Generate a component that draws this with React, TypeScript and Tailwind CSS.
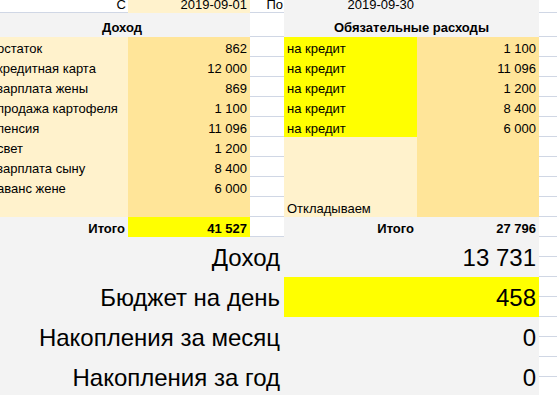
import React from "react";

const font = { fontFamily: '"Liberation Sans", Arial, sans-serif' };

type CellProps = {
  w: string;
  bg: string;
  align?: "left" | "right" | "center";
  bold?: boolean;
  children?: React.ReactNode;
};

function Cell({ w, bg, align = "left", bold, children }: CellProps) {
  const j =
    align === "right" ? "justify-end pr-[3px]" : align === "center" ? "justify-center" : "justify-start pl-[3px]";
  return (
    <div className={`${w} ${bg} ${j} ${bold ? "font-bold" : ""} flex h-full items-end overflow-hidden whitespace-nowrap pb-[1px] text-[13px] leading-[15px] text-black`}>
      {children}
    </div>
  );
}

function Grid({ w }: { w: string }) {
  return <div className={`${w} h-full border-b border-[#d0d7e5] bg-white`} />;
}

const income: [string, string][] = [
  ["остаток", "862"],
  ["кредитная карта", "12 000"],
  ["зарплата жены", "869"],
  ["продажа картофеля", "1 100"],
  ["пенсия", "11 096"],
  ["свет", "1 200"],
  ["зарплата сыну", "8 400"],
  ["аванс жене", "6 000"],
  ["", ""],
];

const expenses: [string, string, boolean][] = [
  ["на кредит", "1 100", true],
  ["на кредит", "11 096", true],
  ["на кредит", "1 200", true],
  ["на кредит", "8 400", true],
  ["на кредит", "6 000", true],
  ["", "", false],
  ["", "", false],
  ["", "", false],
  ["Откладываем", "", false],
];

const big: [string, string, boolean][] = [
  ["Доход", "13 731", false],
  ["Бюджет на день", "458", true],
  ["Накопления за месяц", "0", false],
  ["Накопления за год", "0", false],
];

export default function App() {
  return (
    <div className="h-[395px] w-[557px] overflow-hidden bg-white" style={font}>
      {/* top row */}
      <div className="flex h-[13px]">
        <div className="flex h-full w-[128px] items-end justify-end overflow-hidden border-b border-[#d0d7e5] bg-white pr-[2px] text-[13px] leading-[15px]">С</div>
        <Cell w="w-[122px]" bg="bg-[#fff2cc]" align="right">2019-09-01</Cell>
        <div className="flex h-full w-[34px] items-end justify-end overflow-hidden border-b border-[#d0d7e5] bg-white pr-[1px] text-[13px] leading-[15px]">По</div>
        <Cell w="w-[133px]" bg="bg-[#f3f3f3]" align="right">2019-09-30</Cell>
        <Cell w="w-[122px]" bg="bg-[#f3f3f3]" />
        <Grid w="flex-1" />
      </div>
      {/* header row */}
      <div className="flex h-[24px]">
        <div className="flex h-full w-[250px] items-end justify-center bg-[#f3f3f3] pb-[2px] pr-[6px] text-[13px] font-bold leading-[15px] text-black">Доход</div>
        <Grid w="w-[34px]" />
        <div className="flex h-full w-[255px] items-end justify-center bg-[#f3f3f3] pb-[2px] text-[13px] font-bold leading-[15px] text-black">Обязательные расходы</div>
        <Grid w="flex-1" />
      </div>
      {/* data rows */}
      {income.map((r, i) => (
        <div key={i} className="flex h-[20px]">
          <Cell w="w-[128px]" bg="bg-[#fff2cc]">
            <span className="-ml-[6px]">{r[0]}</span>
          </Cell>
          <Cell w="w-[122px]" bg="bg-[#ffe599]" align="right">{r[1]}</Cell>
          <Grid w="w-[34px]" />
          <Cell w="w-[133px]" bg={expenses[i][2] ? "bg-[#ffff00]" : "bg-[#fff2cc]"}>{expenses[i][0]}</Cell>
          <Cell w="w-[122px]" bg="bg-[#ffe599]" align="right">{expenses[i][1]}</Cell>
          <Grid w="flex-1" />
        </div>
      ))}
      {/* totals */}
      <div className="flex h-[20px]">
        <Cell w="w-[128px]" bg="bg-[#f3f3f3]" align="right" bold>Итого</Cell>
        <Cell w="w-[122px]" bg="bg-[#ffff00]" align="right" bold>41 527</Cell>
        <Grid w="w-[34px]" />
        <Cell w="w-[133px]" bg="bg-[#f3f3f3]" align="right" bold>Итого</Cell>
        <Cell w="w-[122px]" bg="bg-[#f3f3f3]" align="right" bold>27 796</Cell>
        <Grid w="flex-1" />
      </div>
      {/* big rows */}
      {big.map((r, i) => (
        <div key={i} className="flex h-[40px]">
          <div className="flex h-full w-[284px] items-end justify-end bg-[#f3f3f3] pb-[5px] pr-[4px] text-[24px] leading-[28px] text-black">{r[0]}</div>
          <div className={`${r[2] ? "bg-[#ffff00]" : "bg-[#f3f3f3]"} flex h-full w-[255px] items-end justify-end pb-[5px] pr-[3px] text-[24px] leading-[28px] text-black`}>{r[1]}</div>
          <div className="flex h-full flex-1 flex-col">
            <div className="h-[20px] border-b border-[#d0d7e5] bg-white" />
            <div className="h-[20px] border-b border-[#d0d7e5] bg-white" />
          </div>
        </div>
      ))}
    </div>
  );
}
